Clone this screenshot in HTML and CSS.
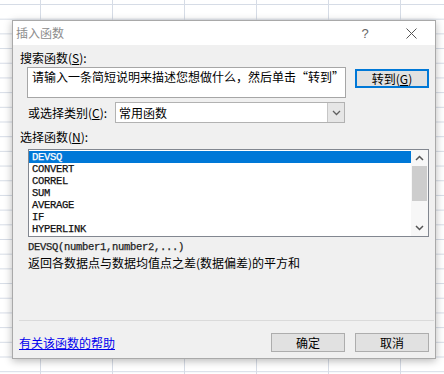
FILE: index.html
```html
<!DOCTYPE html>
<html>
<head>
    <title>插入函数</title>
    <link rel="stylesheet" href="styles.css">
</head>
<body>
    <div class="dialog">
        <!-- Judul jendela -->
        <div class="titlebar">
            <span class="title">插入函数</span>
            <span class="help">?</span>
            <span class="close">
                <svg width="11" height="11" viewBox="0 0 11 11"><path d="M0.5 0.5 L10.5 10.5 M10.5 0.5 L0.5 10.5" stroke="#555" stroke-width="1" fill="none"/></svg>
            </span>
        </div>

        <div class="content">
            <div class="label">搜索函数(<u>S</u>):</div>
            <div class="search-row">
                <div class="search-box">请输入一条简短说明来描述您想做什么，然后单击“转到”</div>
                <button class="btn btn-go">转到(<u>G</u>)</button>
            </div>

            <div class="cat-row">
                <span class="label">或选择类别(<u>C</u>):</span>
                <div class="select">
                    <span class="select-text">常用函数</span>
                    <span class="select-arrow">
                        <svg width="9" height="6" viewBox="0 0 9 6"><path d="M1 1 L4.5 4.5 L8 1" stroke="#606060" stroke-width="1.3" fill="none"/></svg>
                    </span>
                </div>
            </div>

            <div class="label label-list">选择函数(<u>N</u>):</div>
            <div class="listbox">
                <ul class="items">
                    <li class="selected">DEVSQ</li>
                    <li>CONVERT</li>
                    <li>CORREL</li>
                    <li>SUM</li>
                    <li>AVERAGE</li>
                    <li>IF</li>
                    <li>HYPERLINK</li>
                </ul>
                <div class="scrollbar">
                    <svg class="sb-arrow" width="9" height="6" viewBox="0 0 9 6"><path d="M1 5 L4.5 1.5 L8 5" stroke="#555" stroke-width="1.5" fill="none"/></svg>
                    <div class="sb-track"><div class="sb-thumb"></div></div>
                    <svg class="sb-arrow" width="9" height="6" viewBox="0 0 9 6"><path d="M1 1 L4.5 4.5 L8 1" stroke="#555" stroke-width="1.5" fill="none"/></svg>
                </div>
            </div>

            <div class="syntax">DEVSQ(number1,number2,...)</div>
            <div class="desc">返回各数据点与数据均值点之差(数据偏差)的平方和</div>

            <div class="separator"></div>

            <div class="footer">
                <a class="help-link" href="#">有关该函数的帮助</a>
                <div class="buttons">
                    <button class="btn">确定</button>
                    <button class="btn">取消</button>
                </div>
            </div>
        </div>
    </div>
</body>
</html>
```

FILE: styles.css
```css
body {
    margin: 0;
    padding: 20px 0 0 12px;
    height: 374px;
    box-sizing: border-box;
    overflow: hidden;
    font-family: "Noto Sans CJK SC", "Liberation Sans", sans-serif;
    font-size: 12px;
    color: #000;
    background-color: #fff;
    /* garis-garis lembar kerja di belakang dialog */
    background-image:
        linear-gradient(to right, #d6dce6 1px, transparent 1px),
        linear-gradient(to bottom, #d6dce6 1px, transparent 1px);
    background-size: 72px 100%, 100% 14.7px;
    background-position: 40px 0, 0 4px;
}
.dialog {
    width: 424px;
    height: 339px;
    box-sizing: border-box;
    background: #f0f0f0;
    border: 1px solid #a9a9a9;
    box-shadow: 0 2px 8px rgba(0, 0, 0, 0.28);
    display: flex;
    flex-direction: column;
}
.titlebar {
    height: 24px;
    background: #fff;
    display: flex;
    align-items: center;
    padding-left: 3px;
}
.title {
    color: #8c8c8c;
    flex: 1;
    line-height: 24px;
}
.help {
    color: #666;
    font-family: "Liberation Sans", sans-serif;
    font-size: 13px;
    width: 46px;
    text-align: center;
}
.close {
    width: 46px;
    display: flex;
    justify-content: center;
    margin-right: 1px;
}
.content {
    flex: 1;
    padding: 0 6px 0 7px;
    display: flex;
    flex-direction: column;
}
.label {
    line-height: 16px;
    height: 16px;
    white-space: nowrap;
}
.content > .label:first-child {
    margin-top: 5px;
}
u {
    text-decoration: underline;
    text-underline-offset: 1px;
}
.search-row {
    display: flex;
    margin-top: 1px;
    align-items: flex-start;
}
.search-box {
    margin-left: 7px;
    width: 319px;
    height: 31px;
    box-sizing: border-box;
    background: #fff;
    border: 1px solid #a6a6a6;
    padding: 1px 0 0 4px;
    line-height: 16px;
    white-space: nowrap;
    overflow: hidden;
}
.btn {
    width: 74px;
    height: 19px;
    box-sizing: border-box;
    background: #e1e1e1;
    border: 1px solid #adadad;
    font-family: "Noto Sans CJK SC", "Liberation Sans", sans-serif;
    font-size: 12px;
    line-height: 16px;
    padding: 0;
    color: #000;
}
.btn-go {
    margin-left: 9px;
    margin-top: 2px;
    border: 2px solid #0078d7;
}
.cat-row {
    display: flex;
    align-items: center;
    margin-top: 4px;
    height: 21px;
}
.cat-row .label {
    margin-left: 8px;
    width: 87px;
}
.select {
    width: 230px;
    height: 21px;
    box-sizing: border-box;
    background: #fff;
    border: 1px solid #b2b2b2;
    display: flex;
    align-items: center;
}
.select-text {
    flex: 1;
    padding-left: 3px;
}
.select-arrow {
    width: 16px;
    height: 19px;
    background: #e6e6e6;
    border-left: 1px solid #c6c6c6;
    display: flex;
    align-items: center;
    justify-content: center;
}
.label-list {
    margin-top: 6px;
}
.listbox {
    margin: 4px 0 0 8px;
    width: 401px;
    height: 88px;
    box-sizing: border-box;
    background: #fff;
    border: 1px solid #828790;
    display: flex;
}
.items {
    list-style: none;
    margin: 0;
    padding: 1px 0 0 0;
    flex: 1;
    font-family: "Liberation Mono", monospace;
    font-size: 10.5px;
    letter-spacing: -0.3px;
    -webkit-text-stroke: 0.25px #111;
    color: #111;
}
.items li {
    height: 12px;
    line-height: 12px;
    padding-left: 3px;
}
.items li.selected {
    background: #0078d7;
    color: #fff;
    -webkit-text-stroke: 0.25px #fff;
}
.scrollbar {
    width: 17px;
    background: #f7f7f7;
    display: flex;
    flex-direction: column;
    align-items: center;
}
.sb-arrow {
    margin: 5px 0;
}
.sb-track {
    flex: 1;
    width: 100%;
}
.sb-thumb {
    margin: 0 1px;
    height: 35px;
    background: #cdcdcd;
}
.syntax {
    margin-top: 3px;
    padding-left: 8px;
    line-height: 14px;
    font-family: "Liberation Mono", monospace;
    font-size: 10.5px;
    letter-spacing: -0.3px;
    -webkit-text-stroke: 0.25px #222;
    color: #222;
}
.desc {
    margin-top: 2px;
    padding-left: 8px;
    line-height: 14px;
}
.separator {
    margin: 50px -5px 0 -1px;
    height: 1px;
    background: #dadada;
}
.footer {
    margin-top: 12px;
    display: flex;
    align-items: center;
    justify-content: space-between;
}
.help-link {
    color: #0000ee;
    text-decoration: underline;
    margin-left: -1px;
}
.buttons {
    display: flex;
    gap: 10px;
}
```
